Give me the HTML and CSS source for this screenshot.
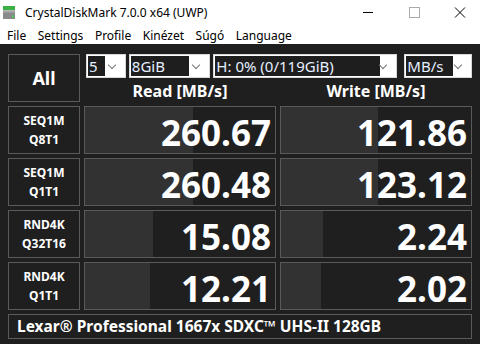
FILE: index.html
```html
<!DOCTYPE html>
<html lang="hu">
<head>
    <meta charset="UTF-8">
    <title>CrystalDiskMark 7.0.0 x64 (UWP)</title>
    <link rel="stylesheet" href="styles.css">
</head>
<body>
    <!-- barra de titulo -->
    <div class="titlebar">
        <svg class="app-icon" width="14" height="14" viewBox="0 0 14 14">
            <rect x="0" y="0" width="12" height="4" fill="#3cb043"/>
            <rect x="0" y="4.5" width="12" height="8.5" fill="#8a8a8a"/>
            <rect x="0" y="4.5" width="12" height="2" fill="#a8a8a8"/>
            <rect x="9" y="9.5" width="2" height="2" fill="#3fd04a"/>
        </svg>
        <span class="title">CrystalDiskMark 7.0.0 x64 (UWP)</span>
        <div class="controls">
            <svg width="46" height="22" viewBox="0 0 46 22"><path d="M18 11.5h10" stroke="#000" stroke-width="1"/></svg>
            <svg width="46" height="22" viewBox="0 0 46 22"><rect x="18.5" y="6.5" width="10" height="10" fill="none" stroke="#aaa" stroke-width="1"/></svg>
            <svg width="46" height="22" viewBox="0 0 46 22"><path d="M18 6.5l10 10M28 6.5l-10 10" stroke="#000" stroke-width="1"/></svg>
        </div>
    </div>

    <div class="menubar">
        <span>File</span>
        <span>Settings</span>
        <span>Profile</span>
        <span>Kinézet</span>
        <span>Súgó</span>
        <span>Language</span>
    </div>

    <!-- area principal -->
    <div class="main">
        <div class="box all">All</div>
        <div class="top">
            <div class="selects">
                <div class="select s-count"><span class="val">5</span><i class="chev"></i></div>
                <div class="select s-size"><span class="val">8GiB</span><i class="chev"></i></div>
                <div class="select s-drive"><span class="val">H: 0% (0/119GiB)</span><i class="chev"></i></div>
                <div class="select s-unit"><span class="val">MB/s</span><i class="chev"></i></div>
            </div>
            <div class="heads">
                <div class="head">Read [MB/s]</div>
                <div class="head">Write [MB/s]</div>
            </div>
        </div>

        <div class="box label">SEQ1M<br>Q8T1</div>
        <div class="box result"><div class="bar" style="width: 57%"></div><span>260.67</span></div>
        <div class="box result"><div class="bar" style="width: 51%"></div><span>121.86</span></div>

        <div class="box label">SEQ1M<br>Q1T1</div>
        <div class="box result"><div class="bar" style="width: 57%"></div><span>260.48</span></div>
        <div class="box result"><div class="bar" style="width: 51%"></div><span>123.12</span></div>

        <div class="box label">RND4K<br>Q32T16</div>
        <div class="box result"><div class="bar" style="width: 36%"></div><span>15.08</span></div>
        <div class="box result"><div class="bar" style="width: 22%"></div><span>2.24</span></div>

        <div class="box label">RND4K<br>Q1T1</div>
        <div class="box result"><div class="bar" style="width: 34%"></div><span>12.21</span></div>
        <div class="box result"><div class="bar" style="width: 21%"></div><span>2.02</span></div>

        <div class="box footer">Lexar® Professional 1667x SDXC™ UHS-II 128GB</div>
    </div>
</body>
</html>
```

FILE: styles.css
```css
/* base */
body {
    margin: 0;
    width: 480px;
    height: 344px;
    overflow: hidden;
    font-family: "Noto Sans", "Open Sans", sans-serif;
    background-color: #1f1f1f;
}

/* barra de titulo */
.titlebar {
    height: 24px;
    background: #fff;
    display: flex;
    align-items: center;
    font-size: 12px;
    color: #000;
}

.app-icon {
    margin-left: 3px;
    margin-top: 1px;
}

.title {
    margin-left: 8px;
    padding-top: 1px;
}

.controls {
    margin-left: auto;
    display: flex;
    margin-right: -3px;
}

/* menu */
.menubar {
    height: 20px;
    background: #fff;
    display: flex;
    align-items: center;
    font-size: 12px;
    padding-left: 1px;
    padding-top: 2px;
    box-sizing: border-box;
}

.menubar span {
    padding: 0 6px;
}

.menubar span + span {
    margin-left: -0.5px;
}

/* area principal */
.main {
    display: grid;
    grid-template-columns: 72px 192px 192px;
    grid-template-rows: 48px 48px 48px 48px 48px 25px;
    gap: 4px;
    padding: 10px 8px 0 8px;
}

.box {
    border: 1px solid #5a5a5a;
    box-sizing: border-box;
    color: #fff;
    font-weight: bold;
    background: #1f1f1f;
}

.all {
    display: flex;
    align-items: center;
    justify-content: center;
    font-size: 18px;
}

.top {
    grid-column: 2 / 4;
    display: flex;
    flex-direction: column;
}

.selects {
    display: flex;
    height: 24px;
    margin-left: 2px;
}

.select {
    background: #fff;
    border: 1px solid #d8d8d8;
    box-sizing: border-box;
    padding: 1px;
    display: flex;
    align-items: stretch;
}

.select .val {
    background: #1e1e1e;
    color: #e6efff;
    font-size: 15px;
    line-height: 20px;
    padding-left: 1px;
}

.chev {
    flex: 1;
    position: relative;
}

.chev::after {
    content: "";
    position: absolute;
    right: 9px;
    top: 6px;
    width: 5px;
    height: 5px;
    border-right: 1px solid #777;
    border-bottom: 1px solid #777;
    transform: rotate(45deg);
}

.s-count { width: 40px; }
.s-count .val { width: 16px; }
.s-size { width: 82px; margin-left: 3px; }
.s-size .val { width: 57px; }
.s-drive { width: 185px; margin-left: 3px; }
.s-drive .val { width: 164px; }
.s-unit { width: 68px; margin-left: 7px; }
.s-unit .val { width: 46px; }

.heads {
    display: flex;
    gap: 4px;
    flex: 1;
}

.head {
    width: 192px;
    text-align: center;
    color: #fff;
    font-weight: bold;
    font-size: 16px;
    line-height: 20px;
    padding-top: 3px;
}

.label {
    display: flex;
    align-items: center;
    justify-content: center;
    text-align: center;
    font-size: 12px;
    line-height: 19px;
}

.result {
    position: relative;
    display: flex;
    align-items: center;
    justify-content: flex-end;
    font-size: 35px;
    padding-right: 4px;
    padding-top: 4px;
}

.result .bar {
    position: absolute;
    left: 0;
    top: 0;
    bottom: 0;
    background: #323232;
}

.result span {
    position: relative;
}

.footer {
    grid-column: 1 / 4;
    font-size: 15.5px;
    line-height: 23px;
    padding-left: 8px;
}
```
